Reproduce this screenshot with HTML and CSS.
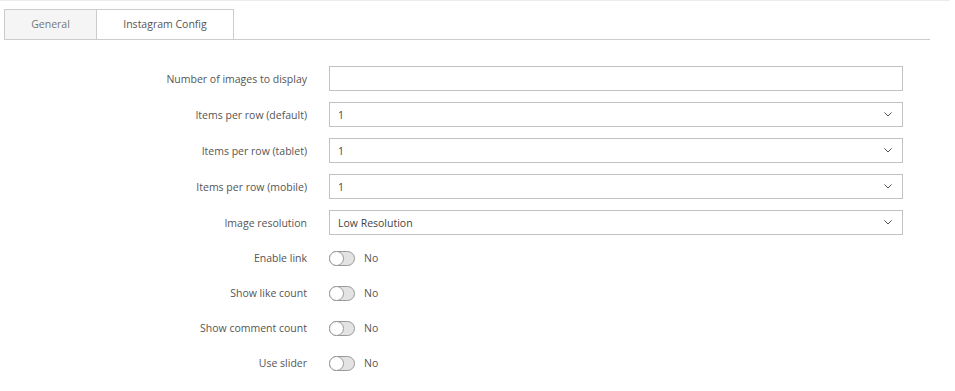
FILE: index.html
```html
<!DOCTYPE html>
<html lang="en">
<head>
  <meta charset="UTF-8" />
  <title>Instagram Config</title>
  <link rel="stylesheet" href="styles.css">
</head>
<body>
  <div class="page">
    <div class="tabs">
      <div class="tab tab-muted">General</div>
      <div class="tab tab-active">Instagram Config</div>
    </div>

    <form class="config-form">
      <div class="form-row">
        <label for="imgCount">Number of images to display</label>
        <input type="text" id="imgCount" class="field">
      </div>

      <div class="form-row">
        <label for="perRowDefault">Items per row (default)</label>
        <div class="select-wrap">
          <select id="perRowDefault" class="field">
            <option>1</option>
          </select>
          <svg class="chevron" viewBox="0 0 8 5" width="8" height="5"><path d="M0.5 0.5 L4 4 L7.5 0.5" fill="none" stroke="#555" stroke-width="1"/></svg>
        </div>
      </div>

      <div class="form-row">
        <label for="perRowTablet">Items per row (tablet)</label>
        <div class="select-wrap">
          <select id="perRowTablet" class="field">
            <option>1</option>
          </select>
          <svg class="chevron" viewBox="0 0 8 5" width="8" height="5"><path d="M0.5 0.5 L4 4 L7.5 0.5" fill="none" stroke="#555" stroke-width="1"/></svg>
        </div>
      </div>

      <div class="form-row">
        <label for="perRowMobile">Items per row (mobile)</label>
        <div class="select-wrap">
          <select id="perRowMobile" class="field">
            <option>1</option>
          </select>
          <svg class="chevron" viewBox="0 0 8 5" width="8" height="5"><path d="M0.5 0.5 L4 4 L7.5 0.5" fill="none" stroke="#555" stroke-width="1"/></svg>
        </div>
      </div>

      <div class="form-row">
        <label for="resolution">Image resolution</label>
        <div class="select-wrap">
          <select id="resolution" class="field">
            <option>Low Resolution</option>
          </select>
          <svg class="chevron" viewBox="0 0 8 5" width="8" height="5"><path d="M0.5 0.5 L4 4 L7.5 0.5" fill="none" stroke="#555" stroke-width="1"/></svg>
        </div>
      </div>

      <div class="form-row toggle-row">
        <label>Enable link</label>
        <div class="switch"><span class="track"><span class="knob"></span></span><span class="switch-text">No</span></div>
      </div>

      <div class="form-row toggle-row">
        <label>Show like count</label>
        <div class="switch"><span class="track"><span class="knob"></span></span><span class="switch-text">No</span></div>
      </div>

      <div class="form-row toggle-row">
        <label>Show comment count</label>
        <div class="switch"><span class="track"><span class="knob"></span></span><span class="switch-text">No</span></div>
      </div>

      <div class="form-row toggle-row">
        <label>Use slider</label>
        <div class="switch"><span class="track"><span class="knob"></span></span><span class="switch-text">No</span></div>
      </div>
    </form>
  </div>
</body>
</html>
```

FILE: styles.css
```css
body {
  margin: 0;
  font-family: "Open Sans", Arial, sans-serif;
  font-size: 10.5px;
  color: #555;
  background: #fff;
}

.page {
  border-top: 1px solid #ececec;
  width: 950px;
  padding-top: 8px;
}

.tabs {
  display: flex;
  margin-left: 4px;
  width: 926px;
  border-bottom: 1px solid #ccc;
}
.tab {
  height: 29px;
  line-height: 29px;
  border: 1px solid #ccc;
  border-bottom: none;
  text-align: center;
}
.tab-muted {
  width: 91px;
  background: #f5f5f5;
  color: #777;
}
.tab-active {
  width: 136px;
  border-left: none;
  background: #fff;
  color: #555;
}

.config-form {
  display: flex;
  flex-direction: column;
  gap: 11px;
  margin-top: 26px;
}

.form-row {
  display: grid;
  grid-template-columns: 307px 574px;
  column-gap: 22px;
  align-items: center;
  min-height: 25px;
}
.form-row label {
  text-align: right;
  color: #555;
}

.field {
  box-sizing: border-box;
  width: 574px;
  height: 25px;
  border: 1px solid #c2c2c2;
  background: #fff;
  font-family: "Open Sans", Arial, sans-serif;
  font-size: 10.5px;
  color: #444;
  padding: 0 8px;
  margin: 0;
  border-radius: 0;
}
select.field {
  -webkit-appearance: none;
  appearance: none;
}

.select-wrap {
  position: relative;
  width: 574px;
  height: 25px;
}
.chevron {
  position: absolute;
  right: 11px;
  top: 10px;
  pointer-events: none;
}

.toggle-row {
  min-height: 24px;
}

.switch {
  display: flex;
  align-items: center;
  gap: 9px;
}
.track {
  box-sizing: border-box;
  display: block;
  width: 26px;
  height: 15px;
  border: 1px solid #999;
  border-radius: 8px;
  background: #e3e3e3;
  position: relative;
}
.knob {
  box-sizing: border-box;
  position: absolute;
  left: -1px;
  top: -1px;
  width: 15px;
  height: 15px;
  border: 1px solid #999;
  border-radius: 50%;
  background: #fff;
}
.switch-text {
  color: #555;
}
```
